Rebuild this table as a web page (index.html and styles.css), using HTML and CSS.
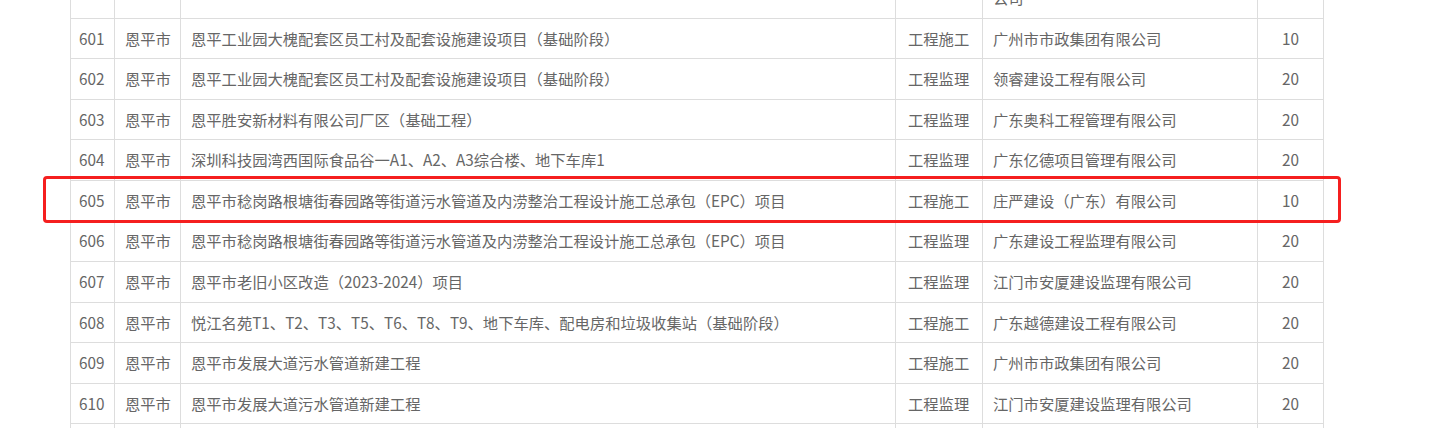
FILE: index.html
```html
<!DOCTYPE html>
<html lang="zh-CN">
<head>
<meta charset="utf-8">
<title>项目列表</title>
<link rel="stylesheet" href="styles.css">
</head>
<body>
<div class="page">
  <table class="list">
    <colgroup>
      <col class="c-no"><col class="c-city"><col class="c-name"><col class="c-type"><col class="c-org"><col class="c-score">
    </colgroup>
    <tbody>
      <tr><td>600</td><td class="city">恩平市</td><td class="name">恩平市城区污水处理厂提标改造工程</td><td class="type">工程施工</td><td>广东省建筑设计研究院集团股份有限公司</td><td class="score">10</td></tr>
      <tr><td>601</td><td class="city">恩平市</td><td class="name">恩平工业园大槐配套区员工村及配套设施建设项目（基础阶段）</td><td class="type">工程施工</td><td>广州市市政集团有限公司</td><td class="score">10</td></tr>
      <tr><td>602</td><td class="city">恩平市</td><td class="name">恩平工业园大槐配套区员工村及配套设施建设项目（基础阶段）</td><td class="type">工程监理</td><td>领睿建设工程有限公司</td><td class="score">20</td></tr>
      <tr><td>603</td><td class="city">恩平市</td><td class="name">恩平胜安新材料有限公司厂区（基础工程）</td><td class="type">工程监理</td><td>广东奥科工程管理有限公司</td><td class="score">20</td></tr>
      <tr><td>604</td><td class="city">恩平市</td><td class="name">深圳科技园湾西国际食品谷一A1、A2、A3综合楼、地下车库1</td><td class="type">工程监理</td><td>广东亿德项目管理有限公司</td><td class="score">20</td></tr>
      <tr class="marked"><td>605</td><td class="city">恩平市</td><td class="name">恩平市稔岗路根塘街春园路等街道污水管道及内涝整治工程设计施工总承包（EPC）项目</td><td class="type">工程施工</td><td>庄严建设（广东）有限公司</td><td class="score">10</td></tr>
      <tr><td>606</td><td class="city">恩平市</td><td class="name">恩平市稔岗路根塘街春园路等街道污水管道及内涝整治工程设计施工总承包（EPC）项目</td><td class="type">工程监理</td><td>广东建设工程监理有限公司</td><td class="score">20</td></tr>
      <tr><td>607</td><td class="city">恩平市</td><td class="name">恩平市老旧小区改造（2023-2024）项目</td><td class="type">工程监理</td><td>江门市安厦建设监理有限公司</td><td class="score">20</td></tr>
      <tr><td>608</td><td class="city">恩平市</td><td class="name">悦江名苑T1、T2、T3、T5、T6、T8、T9、地下车库、配电房和垃圾收集站（基础阶段）</td><td class="type">工程施工</td><td>广东越德建设工程有限公司</td><td class="score">20</td></tr>
      <tr><td>609</td><td class="city">恩平市</td><td class="name">恩平市发展大道污水管道新建工程</td><td class="type">工程施工</td><td>广州市市政集团有限公司</td><td class="score">20</td></tr>
      <tr><td>610</td><td class="city">恩平市</td><td class="name">恩平市发展大道污水管道新建工程</td><td class="type">工程监理</td><td>江门市安厦建设监理有限公司</td><td class="score">20</td></tr>
      <tr><td>611</td><td class="city">恩平市</td><td class="name">恩平市发展大道污水管道新建工程</td><td class="type">工程监理</td><td>江门市安厦建设监理有限公司</td><td class="score">20</td></tr>
    </tbody>
  </table>
  <div class="highlight"></div>
</div>
</body>
</html>
```
FILE: styles.css
```css
html, body {
  margin: 0;
  padding: 0;
  background: #fff;
}
.page {
  position: relative;
  height: 428px;
  overflow: hidden;
  font-family: "Noto Sans CJK SC", "Noto Sans", sans-serif;
  font-size: 15.3px;
  color: #666;
}
.list {
  margin: -44.7px 0 0 70px;
  width: 1254px;
  table-layout: fixed;
  border-collapse: collapse;
}
.c-no { width: 44px; }
.c-city { width: 66px; }
.c-name { width: 715px; }
.c-type { width: 87px; }
.c-org { width: 275px; }
.c-score { width: 66px; }
.list td {
  border: 1px solid #ddd;
  padding: 9px 10px;
  line-height: 21.6px;
  vertical-align: middle;
  text-align: left;
  white-space: normal;
}
.list td:first-child { padding: 9px 8px; white-space: nowrap; }
.list td.city { padding: 9px 6px 9px 10px; white-space: nowrap; }
.list td.type { padding-left: 12px; padding-right: 6px; white-space: nowrap; }
.list td.score { text-align: center; }
.highlight {
  position: absolute;
  left: 43px;
  top: 176px;
  width: 1292px;
  height: 41px;
  border: 3px solid #f51f1f;
  border-radius: 4px;
}
```
